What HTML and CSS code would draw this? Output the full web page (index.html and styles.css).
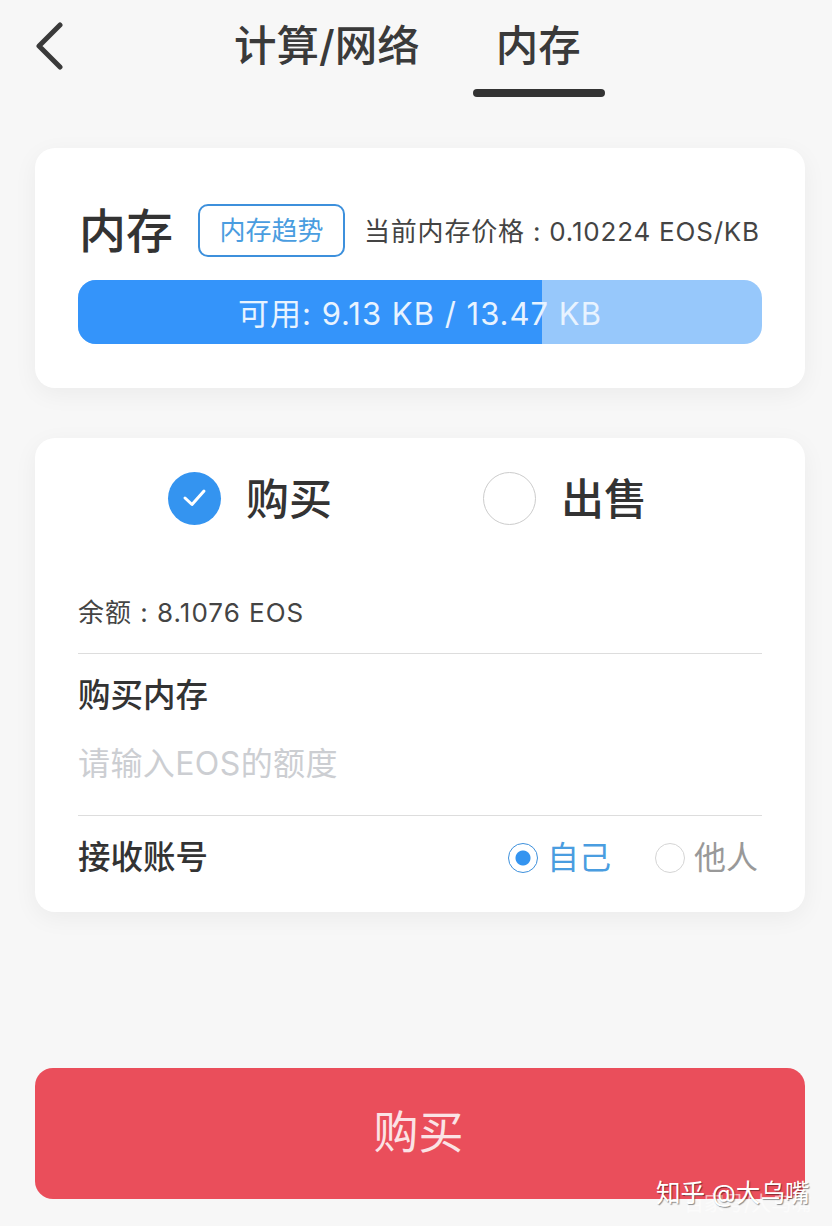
FILE: index.html
```html
<!DOCTYPE html>
<html lang="zh-CN">
<head>
    <meta charset="UTF-8">
    <meta name="viewport" content="width=device-width, initial-scale=1.0">
    <title>内存</title>
    <link rel="stylesheet" href="styles.css">
</head>
<body>
    <div class="page">
        <header class="header">
            <svg class="back" width="30" height="48" viewBox="0 0 30 48">
                <path d="M26 3 L5 24 L26 45" fill="none" stroke="#3a3a3a" stroke-width="5" stroke-linecap="round" stroke-linejoin="round"/>
            </svg>
            <div class="tabs">
                <div class="tab">计算/网络</div>
                <div class="tab tab-active">内存</div>
            </div>
        </header>

        <section class="card card-memory">
            <div class="memory-head">
                <h1 class="memory-title">内存</h1>
                <div class="trend-tag">内存趋势</div>
                <div class="price">当前内存价格 : 0.10224 EOS/KB</div>
            </div>
            <div class="bar">
                <div class="bar-fill"></div>
                <div class="bar-text">可用: 9.13 KB / 13.47 KB</div>
            </div>
        </section>

        <section class="card card-trade">
            <div class="mode-row">
                <div class="mode mode-buy">
                    <span class="mode-check">
                        <svg width="26" height="22" viewBox="0 0 26 22">
                            <path d="M3 11 L10 17.500 L22 4" fill="none" stroke="#fff" stroke-width="3" stroke-linecap="round" stroke-linejoin="round"/>
                        </svg>
                    </span>
                    <span class="mode-label">购买</span>
                </div>
                <div class="mode mode-sell">
                    <span class="mode-check mode-check-off"></span>
                    <span class="mode-label">出售</span>
                </div>
            </div>
            <div class="balance">余额 : 8.1076 EOS</div>
            <div class="amount">
                <div class="field-label">购买内存</div>
                <div class="placeholder">请输入EOS的额度</div>
            </div>
            <div class="account">
                <div class="field-label">接收账号</div>
                <div class="account-options">
                    <div class="option option-on"><span class="dot"></span>自己</div>
                    <div class="option"><span class="dot"></span>他人</div>
                </div>
            </div>
        </section>

        <button class="buy-btn">购买</button>

        <div class="watermark">
            <span class="watermark-ghost">百家号/大乌嘴</span>
            <span class="watermark-main">知乎 @大乌嘴</span>
        </div>
    </div>
</body>
</html>
```

FILE: styles.css
```css
body {
    font-family: 'Inter', 'Noto Sans CJK SC', sans-serif;
    background-color: #f7f7f7;
    color: #333;
    margin: 0;
}

.page {
    position: relative;
    height: 1226px;
    padding: 0 27px 27px 35px;
    box-sizing: border-box;
    display: flex;
    flex-direction: column;
    overflow: hidden;
}

.header {
    position: relative;
    height: 148px;
    flex-shrink: 0;
}

.back {
    position: absolute;
    left: -1px;
    top: 22px;
}

.tabs {
    display: flex;
    gap: 76px;
    padding: 18px 0 0 199px;
}

.tab {
    font-size: 42.500px;
    line-height: 56px;
    color: #3a3a3a;
    font-weight: 500;
}

.tab-active {
    position: relative;
}

.tab-active::after {
    content: '';
    position: absolute;
    left: -23px;
    right: -24px;
    top: 71px;
    height: 8px;
    border-radius: 4px;
    background-color: #333;
}

.card {
    width: 770px;
    background-color: #fff;
    border-radius: 20px;
    box-shadow: 0 6px 24px rgba(0, 0, 0, 0.05);
    padding: 0 43px;
    box-sizing: border-box;
}

.card-memory {
    height: 240px;
    padding-top: 56px;
}

.memory-head {
    display: flex;
    align-items: center;
    height: 53px;
}

.memory-title {
    width: 119px;
    margin: -7px 0 0 1px;
    font-size: 47px;
    font-weight: 500;
    color: #333;
}

.trend-tag {
    width: 147px;
    height: 53px;
    flex-shrink: 0;
    box-sizing: border-box;
    border: 2px solid #3d90dc;
    border-radius: 10px;
    color: #4a9de0;
    font-size: 26px;
    line-height: 49px;
    text-align: center;
}

.price {
    margin: -2px 0 0 19px;
    font-size: 26px;
    letter-spacing: 0.800px;
    color: #444;
    white-space: nowrap;
}

.bar {
    position: relative;
    height: 64px;
    margin-top: 23px;
    border-radius: 18px;
    background-color: #97c8fb;
    overflow: hidden;
}

.bar-fill {
    width: 464px;
    height: 100%;
    background-color: #3494fa;
}

.bar-text {
    position: absolute;
    left: 0;
    right: 0;
    top: 0;
    line-height: 67px;
    text-align: center;
    letter-spacing: 1px;
    color: #e8f3ff;
    font-size: 31px;
}

.card-trade {
    height: 474px;
    margin-top: 50px;
}

.mode-row {
    height: 127px;
    position: relative;
    display: flex;
    padding-top: 33px;
    box-sizing: border-box;
}

.mode {
    display: flex;
    align-items: center;
    gap: 25px;
    height: 54px;
}

.mode-buy {
    margin-left: 90px;
}

.mode-sell {
    margin-left: 151px;
}

.mode-check {
    width: 53px;
    height: 53px;
    border-radius: 50%;
    background-color: #3494f0;
    display: flex;
    align-items: center;
    justify-content: center;
}

.mode-check-off {
    box-sizing: border-box;
    background-color: #fff;
    border: 1px solid #ccc;
}

.mode-label {
    margin-top: -5px;
    font-size: 43px;
    font-weight: 500;
    color: #333;
}

.balance {
    height: 89px;
    line-height: 95px;
    box-sizing: border-box;
    border-bottom: 1px solid #ddd;
    font-size: 26px;
    letter-spacing: 1px;
    color: #444;
}

.amount {
    height: 162px;
    box-sizing: border-box;
    border-bottom: 1px solid #ddd;
    padding-top: 20px;
}

.field-label {
    font-size: 32.500px;
    line-height: 44px;
    font-weight: 500;
    color: #333;
}

.placeholder {
    margin-top: 24px;
    font-size: 32px;
    line-height: 44px;
    letter-spacing: 0.400px;
    color: #ccced2;
}

.account {
    display: flex;
    justify-content: space-between;
    align-items: center;
    padding-top: 20px;
}

.account-options {
    display: flex;
    gap: 44px;
    padding-right: 4px;
}

.option {
    display: flex;
    align-items: center;
    gap: 9px;
    font-size: 32px;
    line-height: 44px;
    color: #999;
}

.dot {
    width: 30px;
    height: 30px;
    box-sizing: border-box;
    border-radius: 50%;
    border: 1px solid #d5d5d5;
    background-color: #fff;
}

.option-on {
    color: #4a9de0;
}

.option-on .dot {
    border-color: #3d90dc;
    background: radial-gradient(circle, #3494f0 0 7px, #fff 8px);
}

.buy-btn {
    width: 770px;
    height: 131px;
    margin-top: auto;
    padding: 0 3px 8px 0;
    border: none;
    border-radius: 18px;
    background-color: #ea4e5b;
    color: #fbe3e5;
    font-family: inherit;
    font-size: 45px;
    cursor: pointer;
}

.watermark {
    position: absolute;
    left: 656px;
    top: 1173px;
    white-space: nowrap;
}

.watermark-main {
    position: relative;
    font-size: 24.600px;
    color: #fff;
    text-shadow: 1px 1px 1px rgba(0, 0, 0, 0.45);
}

.watermark-ghost {
    position: absolute;
    left: 28px;
    top: 15px;
    font-size: 20px;
    color: rgba(255, 255, 255, 0.6);
}
```
